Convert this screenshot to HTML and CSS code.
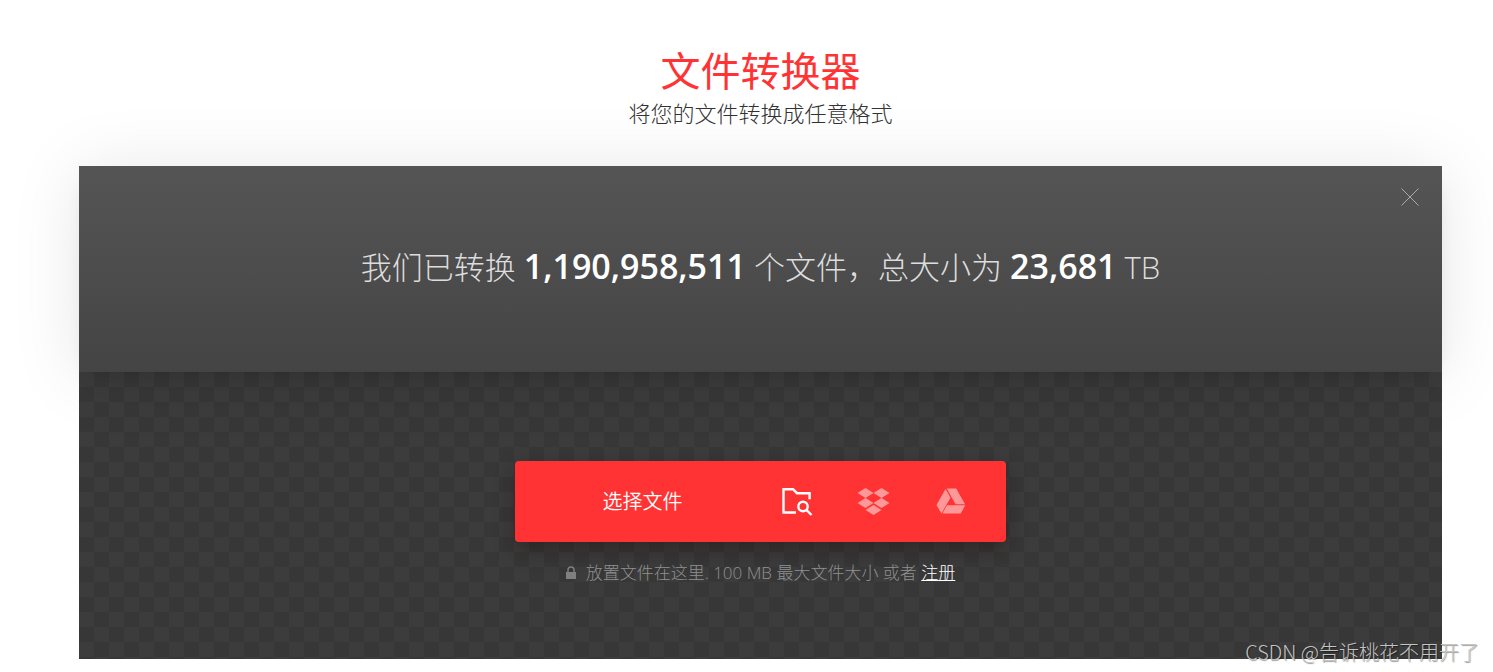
FILE: index.html
```
<!DOCTYPE html>
<html lang="zh-CN">
<head>
  <meta charset="UTF-8" />
  <meta name="viewport" content="width=device-width, initial-scale=1.0"/>
  <title>文件转换器</title>
  <link rel="stylesheet" href="styles.css">
</head>
<body>
  <header class="page-header">
    <h1>文件转换器</h1>
    <p>将您的文件转换成任意格式</p>
  </header>

  <main class="converter">
    <section class="stats">
      <p>我们已转换 <b>1,190,958,511</b> 个文件，总大小为 <b>23,681</b> TB</p>
      <button class="close" type="button" aria-label="关闭">
        <svg width="18" height="18" viewBox="0 0 18 18"><path d="M.5.5l17 17M17.5.5l-17 17" fill="none" stroke="#aaa"/></svg>
      </button>
    </section>

    <section class="upload">
      <div class="picker">
        <button class="choose" type="button">选择文件</button>
        <button class="source active" type="button" aria-label="本地文件">
          <svg width="32" height="30" viewBox="0 0 32 30" fill="none" stroke="currentColor" stroke-width="2.4">
            <path d="M15 25.5H2.5V2.2H12l4 4h12.6v6"/>
            <circle cx="22" cy="19.5" r="4.7"/>
            <path d="M25.5 23l5 5"/>
          </svg>
        </button>
        <button class="source" type="button" aria-label="Dropbox">
          <svg width="32" height="28" viewBox="0 0 32 28" fill="currentColor">
            <path d="M7.500 0l8 5-8 5-8-5zM23.500 0l8 5-8 5-8-5zM7.500 10l8 5-8 5-8-5zM23.500 10l8 5-8 5-8-5zM15.500 17l8 5-8 5-8-5z"/>
          </svg>
        </button>
        <button class="source" type="button" aria-label="Google Drive">
          <svg width="30" height="28" viewBox="0 0 30 28" fill="currentColor">
            <path d="M9.500 1l5 8.700L5.400 25.500.5 17z"/>
            <path d="M10.700.5h9.500L29 16.200h-9.500z"/>
            <path d="M11 17.300h18.300L24.700 25.500H6.300z"/>
          </svg>
        </button>
      </div>
      <p class="hint">
        <svg width="10" height="14" viewBox="0 0 10 14"><path d="M2 7V4a3 3 0 0 1 6 0v3" fill="none" stroke="#808080" stroke-width="1.4"/><path d="M0 6h10v7H0z" fill="#808080"/></svg>
        <span>放置文件在这里. 100 MB 最大文件大小 或者 <a href="#">注册</a></span>
      </p>
    </section>
  </main>

  <div class="watermark">CSDN @告诉桃花不用开了</div>
</body>
</html>
```
FILE: styles.css
```
* {
  box-sizing: border-box;
}

body {
  margin: 0;
  padding: 46px 51px 13px 79px;
  font-family: 'Open Sans', 'Noto Sans CJK SC', sans-serif;
  font-weight: 300;
  background: #fff;
  color: #333;
}

h1, p {
  margin: 0;
}

.page-header {
  text-align: center;
  padding-bottom: 36px;
}

h1 {
  font-size: 40px;
  line-height: 50px;
  font-weight: 400;
  color: #f33;
}

.page-header p {
  font-size: 22px;
  line-height: 34px;
}

.stats {
  position: relative;
  display: flex;
  justify-content: center;
  padding: 78px 20px 82px;
  background: linear-gradient(#555, #444);
  box-shadow: 0 4px 70px rgba(0, 0, 0, 0.1), 0 10px 20px -12px rgba(0, 0, 0, 0.2);
  color: #ddd;
  font-size: 31px;
  line-height: 46px;
  text-align: center;
}

.stats b {
  color: #fff;
  font-size: 34px;
  font-weight: 600;
  line-height: 1;
}

button {
  padding: 0;
  border: none;
  background: none;
  font-family: inherit;
  cursor: pointer;
}

.close {
  position: absolute;
  top: 22px;
  right: 23px;
  display: flex;
}

.upload {
  display: flex;
  flex-direction: column;
  align-items: center;
  padding: 89px 20px 72px;
  background: conic-gradient(#373737 25%, #3c3c3c 0 50%, #373737 0 75%, #3c3c3c 0) 0 0 / 30px 30px;
}

.picker {
  display: flex;
  width: 491px;
  max-width: 100%;
  padding-right: 17px;
  background: #f33;
  border-radius: 4px;
  box-shadow: 0 8px 20px rgba(30, 10, 10, 0.4);
}

.choose {
  flex: 1;
  padding-left: 12px;
  color: #fff;
  font-size: 20px;
  font-weight: 350;
  line-height: 81px;
}

.source {
  display: flex;
  align-items: center;
  justify-content: center;
  width: 77px;
  color: #f99;
}

.source svg {
  overflow: visible;
}

.source.active {
  color: #fff;
}

.hint {
  display: flex;
  align-items: center;
  gap: 10px;
  margin-top: 17px;
  color: #909090;
  font-size: 17px;
  line-height: 28px;
}

.hint a {
  color: #fff;
}

.watermark {
  position: absolute;
  right: 14px;
  bottom: 6px;
  color: #c4c4c4;
  font-family: 'Noto Sans CJK SC', sans-serif;
  font-size: 20px;
  line-height: 28px;
  text-shadow: 1px 1px 1px rgba(0, 0, 0, 0.4);
}
```
